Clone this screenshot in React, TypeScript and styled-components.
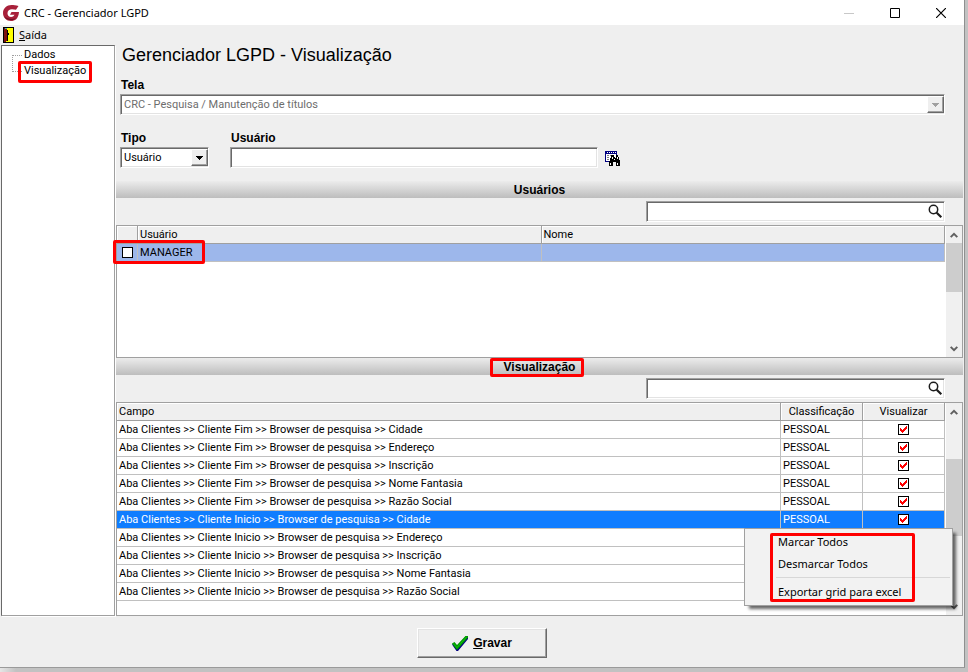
import React from "react";
import styled, { createGlobalStyle, css } from "styled-components";

const ui = `"Noto Sans", "Segoe UI", sans-serif`;
const sans = `"Liberation Sans", Arial, sans-serif`;
const compact = `Roboto, Arial, sans-serif`;

const GlobalStyle = createGlobalStyle`
  * { box-sizing: border-box; }
  body { margin: 0; background: #c2c2c2; font: 11px/16px ${compact}; color: #000; }
  button, input, select { font: inherit; color: inherit; margin: 0; padding: 0; border: 0; border-radius: 0; outline: 0; }
`;

const Desktop = styled.div`
  display: flex;
  min-height: 100vh;
  padding: 0 3px 4px 0;
  background: linear-gradient(to right, #e6e6e6, #c2c2c2 16px);
`;

const Window = styled.div`
  flex: 1;
  min-width: 0;
  display: flex;
  flex-direction: column;
  background: #efefef;
  border-right: 1px solid #8f8f8f;
  border-bottom: 1px solid #9a9a9a;
`;

const TitleBar = styled.header`
  display: flex;
  align-items: center;
  height: 25px;
  padding-left: 3px;
  background: #fff;
  font: 11px/16px ${ui};
`;

const Title = styled.span`
  flex: 1;
  padding-left: 5px;
`;

const CaptionButton = styled.button`
  display: flex;
  align-items: center;
  justify-content: center;
  width: 46px;
  height: 24px;
  background: none;
`;

const MenuBar = styled.nav`
  display: flex;
  height: 20px;
  padding-left: 3px;
`;

const MenuBarItem = styled.button`
  display: flex;
  align-items: center;
  gap: 5px;
  background: none;
  font: 11px/16px ${ui};
`;

const Body = styled.div`
  flex: 1;
  display: flex;
`;

const Sidebar = styled.aside`
  width: 114px;
  margin: 0 1px;
  padding: 1px 0 0 10px;
  background: #fff;
  border: 1px solid #a0a0a0;
  border-left-color: #696969;
  border-top-color: #696969;
  box-shadow: 1px 1px 0 #fff;
`;

const TreeList = styled.ul`
  margin: 0;
  padding: 0;
  list-style: none;
`;

const TreeItem = styled.li<{ $last?: boolean }>`
  position: relative;
  display: flex;
  align-items: center;
  height: 16px;
  padding-left: 12px;
  &::before {
    content: "";
    position: absolute;
    left: 0;
    top: ${(p) => (p.$last ? 0 : 8)}px;
    width: 9px;
    height: 8px;
    border-left: 1px dotted #a0a0a0;
    border-${(p) => (p.$last ? "bottom" : "top")}: 1px dotted #a0a0a0;
  }
`;

const TreeLink = styled.a`
  color: #000;
  text-decoration: none;
`;

const Highlight = styled.span<{ $x: number; $y: number; $w: number; $h: number }>`
  position: absolute;
  left: ${(p) => p.$x}px;
  top: ${(p) => p.$y}px;
  width: ${(p) => p.$w}px;
  height: ${(p) => p.$h}px;
  border: 3px solid #f00;
  border-radius: 2px;
  pointer-events: none;
  z-index: 3;
`;

const Main = styled.main`
  flex: 1;
  min-width: 0;
  display: flex;
  flex-direction: column;
  padding-right: 1px;
`;

const Heading = styled.h1`
  margin: 0 0 11px 6px;
  font: 18px/21px ${sans};
`;

const Form = styled.form`
  display: flex;
  flex-direction: column;
  gap: 15px;
  padding: 0 18px 13px 4px;
`;

const FieldRow = styled.div`
  display: flex;
  align-items: flex-end;
  gap: 21px;
`;

const Field = styled.div<{ $width?: string }>`
  width: ${(p) => p.$width ?? "100%"};
  display: flex;
  flex-direction: column;
`;

const Label = styled.label`
  height: 17px;
  padding-left: 1px;
  font: bold 12px/16px ${sans};
`;

const sunken = css`
  border: 1px solid;
  border-color: #a0a0a0 #fff #fff #a0a0a0;
  box-shadow: inset 1px 1px 0 #696969, inset -1px -1px 0 #e3e3e3;
`;

const ComboBox = styled.div<{ $muted?: boolean }>`
  display: flex;
  height: 21px;
  padding: 1px 0 1px 1px;
  background: #fff;
  color: ${(p) => (p.$muted ? "#6d6d6d" : "#000")};
  ${sunken}
`;

const Select = styled.select`
  flex: 1;
  min-width: 0;
  padding-left: 2px;
  appearance: none;
  background: none;
  opacity: 1;
`;

const Arrow = styled.span`
  display: flex;
  align-items: center;
  justify-content: center;
  width: 17px;
  background: #efefef;
  border: 1px solid;
  border-color: #fff #696969 #696969 #fff;
  box-shadow: inset -1px -1px 0 #a0a0a0;
`;

const TextInput = styled.input`
  width: 100%;
  height: 21px;
  padding: 0 3px;
  background: #fff;
  ${sunken}
`;

const LookupGroup = styled.div`
  display: flex;
  align-items: center;
  gap: 7px;
`;

const IconButton = styled.button`
  display: flex;
  align-items: center;
  justify-content: center;
  background: none;
`;

const SectionBar = styled.h2`
  display: flex;
  align-items: center;
  justify-content: center;
  position: relative;
  margin: 0;
  height: 17px;
  background: linear-gradient(#ececec, #bdbdbd);
  font: bold 12px/16px ${sans};
`;

const SectionTitle = styled.span`
  position: relative;
`;

const SearchRow = styled.div`
  display: flex;
  justify-content: flex-end;
  padding: 3px 18px 3px 0;
`;

const SearchBox = styled.div`
  display: flex;
  width: 299px;
  height: 21px;
  padding: 1px;
  background: #fff;
  ${sunken}
`;

const SearchInput = styled.input`
  flex: 1;
  min-width: 0;
  background: none;
`;

const GridFrame = styled.section<{ $grow?: boolean }>`
  position: relative;
  display: flex;
  ${(p) => (p.$grow ? "flex: 1;" : "height: 133px;")}
  background: #fff;
  border: 1px solid #a0a0a0;
`;

const GridArea = styled.div`
  flex: 1;
  min-width: 0;
`;

const Table = styled.table`
  width: 100%;
  table-layout: fixed;
  border-collapse: separate;
  border-spacing: 0;
`;

const Col = styled.col<{ $width?: number }>`
  width: ${(p) => (p.$width ? `${p.$width}px` : "auto")};
`;

const Th = styled.th<{ $center?: boolean }>`
  height: 18px;
  padding: 0 2px;
  background: #efefef;
  border: 0 solid #a0a0a0;
  border-width: 0 1px 1px 0;
  box-shadow: inset 1px 1px 0 #fff;
  font-weight: normal;
  line-height: 16px;
  text-align: ${(p) => (p.$center ? "center" : "left")};
`;

const Td = styled.td<{ $center?: boolean }>`
  position: relative;
  height: 18px;
  padding: 0 2px;
  border: 0 solid #c0c0c0;
  border-width: 0 1px 1px 0;
  line-height: 16px;
  white-space: nowrap;
  text-align: ${(p) => (p.$center ? "center" : "left")};
`;

const Tr = styled.tr<{ $tone?: "active" | "soft" }>`
  ${(p) => p.$tone === "active" && "background: #107dff; color: #fff;"}
  ${(p) => p.$tone === "soft" && "background: #9db7eb;"}
`;

const Tick = styled.label`
  display: grid;
  justify-content: center;
  align-content: center;
  > * { grid-area: 1 / 1; }
  svg { margin: 2px; pointer-events: none; visibility: hidden; }
  input:checked + svg { visibility: visible; }
`;

const TickInput = styled.input`
  appearance: none;
  width: 11px;
  height: 11px;
  background: #fff;
  border: 1px solid #000;
`;

const ScrollBar = styled.div`
  width: 17px;
  display: flex;
  flex-direction: column;
  background: #f0f0f0;
  border-left: 1px solid #fff;
`;

const ScrollButton = styled.button`
  display: flex;
  align-items: center;
  justify-content: center;
  height: 17px;
  background: none;
`;

const ScrollTrack = styled.div<{ $start: number }>`
  flex: 1;
  padding-top: ${(p) => p.$start}px;
`;

const Thumb = styled.div<{ $size: number }>`
  height: ${(p) => p.$size}px;
  background: #cdcdcd;
`;

const ContextMenu = styled.div`
  position: absolute;
  right: 9px;
  bottom: 9px;
  width: 209px;
  height: 78px;
  padding: 2px 2px 2px 31px;
  background: #f2f2f2;
  border: 1px solid #a0a0a0;
  box-shadow: 4px 4px 3px -1px rgba(0, 0, 0, 0.6);
  font: 11px/16px ${ui};
  z-index: 2;
`;

const MenuItem = styled.button`
  display: block;
  width: 100%;
  height: 22px;
  padding-left: 2px;
  background: none;
  text-align: left;
`;

const Separator = styled.hr`
  margin: 2px 0 3px;
  border: 0;
  border-top: 1px solid #d7d7d7;
`;

const Footer = styled.footer`
  display: flex;
  justify-content: center;
  padding: 12px 0 9px;
`;

const SaveButton = styled.button`
  display: flex;
  align-items: center;
  justify-content: center;
  gap: 5px;
  width: 130px;
  height: 30px;
  background: #efefef;
  border: 1px solid;
  border-color: #fff #696969 #696969 #fff;
  box-shadow: inset -1px -1px 0 #a0a0a0, inset 1px 1px 0 #e3e3e3;
  font: bold 12px/16px ${sans};
`;

const LogoIcon = () => (
  <svg width="16" height="16" viewBox="0 0 16 16">
    <path d="M15.500 1C13 .2 10.500 0 8.500 0 3.800 0 0 3.400 0 8s3.600 8 8 8c3.800 0 7.400-2 8-9H8.500L7 9.800h4.500c-.8 1.500-2 2.200-3.400 2.200C5.900 12 4.500 10.300 4.500 8.200 4.500 5.500 6.500 4.200 9 4.200c1.600 0 3 .2 4 .6z" fill="#a8203a" />
    <path d="M1 11.500C3 15 9 16.500 13 13.200 9.500 14.600 4.500 14 1 11.500z" fill="#6f1226" />
  </svg>
);

const DoorIcon = () => (
  <svg width="11" height="16" viewBox="0 0 11 16" shapeRendering="crispEdges">
    <rect width="11" height="16" fill="#000" />
    <rect x="1" y="1" width="9" height="14" fill="#ff0" />
    <path d="M1 1h2v1h1v12H3v1H1z" fill="#7b1010" />
    <path d="M2 1h2v1H2z" fill="#35b8c8" />
    <path d="M4 3h1v11H4zM5 6h1v2H5z" fill="#000" />
  </svg>
);

const LookupIcon = () => (
  <svg width="16" height="16" viewBox="0 0 16 16" shapeRendering="crispEdges">
    <path d="M0 1h12v11H0z" fill="#000080" />
    <path d="M1 4h10v7H1zM2 2h1v1H2zM4 2h1v1H4zM6 2h1v1H6zM8 2h1v1H8zM10 2h1v1h-1z" fill="#fff" />
    <path d="M2 5h2v1H2zM5 5h3v1H5zM2 7h2v1H2zM2 9h2v1H2z" fill="#808080" />
    <path d="M6 5h3v2h1v1h1V7h0V5h2v2h1v3h1v6h-4v-4H8v4H4v-5h1V8h1z" fill="#000" />
    <path d="M5 13h1v2H5zM12 13h1v2h-1zM7 7h1v2H7zM12 7h1v2h-1zM9 9h1v1H9z" fill="#fff" />
  </svg>
);

const SearchIcon = () => (
  <svg width="15" height="15" viewBox="0 0 15 15" fill="none" stroke="#1c1c1c">
    <circle cx="5.500" cy="5.500" r="4.200" strokeWidth="1.500" />
    <path d="M8.700 8.700l4.600 4.600" strokeWidth="2.200" />
  </svg>
);

const ArrowIcon = ({ color }: { color: string }) => (
  <svg width="7" height="4" viewBox="0 0 7 4" shapeRendering="crispEdges">
    <path d="M0 0h7v1H6v1H5v1H4v1H3V3H2V2H1V1H0z" fill={color} />
  </svg>
);

const Chevron = ({ down }: { down?: boolean }) => (
  <svg width="8" height="6" viewBox="0 0 8 6" fill="none" stroke="#606060" strokeWidth="2">
    <path d={down ? "M.7.900L4 4.200 7.300.900" : "M.7 5.100L4 1.800l3.300 3.300"} />
  </svg>
);

const CheckIcon = () => (
  <svg width="16" height="15" viewBox="0 0 16 15">
    <path d="M0 8.500l2.500-1.500 2.500 3L14 0h2v3L6 15H4.500z" fill="#000080" />
    <path d="M0 7.500L2.500 6 5 9 13.500 0H16v1.500L5.500 13.500h-1z" fill="#009a00" />
    <path d="M1 7.500l4 4L14.500 1" fill="none" stroke="#10c010" />
  </svg>
);

const CheckCell = ({ label, checked }: { label: string; checked?: boolean }) => (
  <Tick>
    <TickInput type="checkbox" aria-label={label} defaultChecked={checked} />
    <svg width="7" height="7" viewBox="0 0 7 7" shapeRendering="crispEdges">
      <path d="M0 2h1v1h1v1h1V3h1V2h1V1h1V0h1v3H6v1H5v1H4v1H3v1H2V6H1V5H0z" fill="#f00" />
    </svg>
  </Tick>
);

const Scroller = ({ start, size }: { start: number; size: number }) => (
  <ScrollBar>
    <ScrollButton aria-label="Rolar para cima"><Chevron /></ScrollButton>
    <ScrollTrack $start={start}><Thumb $size={size} /></ScrollTrack>
    <ScrollButton aria-label="Rolar para baixo"><Chevron down /></ScrollButton>
  </ScrollBar>
);

const Search = ({ label }: { label: string }) => (
  <SearchRow>
    <SearchBox>
      <SearchInput aria-label={label} />
      <IconButton aria-label="Pesquisar"><SearchIcon /></IconButton>
    </SearchBox>
  </SearchRow>
);

const fields = ["Cidade", "Endereço", "Inscrição", "Nome Fantasia", "Razão Social"];
const rows = ["Fim", "Inicio"].flatMap((group) =>
  fields.map((field) => ({
    text: `Aba Clientes >> Cliente ${group} >> Browser de pesquisa >> ${field}`,
    level: group === "Fim" || field === "Cidade" ? "PESSOAL" : "",
  }))
);
const selectedRow = 5;

export default function App() {
  return (
    <>
      <GlobalStyle />
      <Desktop>
        <Window>
          <TitleBar>
            <LogoIcon />
            <Title>CRC - Gerenciador LGPD</Title>
            <CaptionButton aria-label="Minimizar">
              <svg width="10" height="10"><path d="M0 5.500h10" stroke="#c8c8c8" /></svg>
            </CaptionButton>
            <CaptionButton aria-label="Maximizar">
              <svg width="10" height="10"><path d="M.5.500h9v9h-9z" fill="none" stroke="#000" /></svg>
            </CaptionButton>
            <CaptionButton aria-label="Fechar">
              <svg width="10" height="10"><path d="M0 0l10 10M10 0L0 10" stroke="#000" strokeWidth="1.200" /></svg>
            </CaptionButton>
          </TitleBar>
          <MenuBar>
            <MenuBarItem><DoorIcon /><span><u>S</u>aída</span></MenuBarItem>
          </MenuBar>
          <Body>
            <Sidebar>
              <TreeList>
                <TreeItem><TreeLink href="#dados">Dados</TreeLink></TreeItem>
                <TreeItem $last>
                  <TreeLink href="#visualizacao">Visualização</TreeLink>
                  <Highlight $x={6} $y={-2} $w={74} $h={22} />
                </TreeItem>
              </TreeList>
            </Sidebar>
            <Main>
              <Heading>Gerenciador LGPD - Visualização</Heading>
              <Form onSubmit={(e) => e.preventDefault()}>
                <Field>
                  <Label htmlFor="tela">Tela</Label>
                  <ComboBox $muted>
                    <Select id="tela" disabled>
                      <option>CRC - Pesquisa / Manutenção de títulos</option>
                    </Select>
                    <Arrow><ArrowIcon color="#a0a0a0" /></Arrow>
                  </ComboBox>
                </Field>
                <FieldRow>
                  <Field $width="89px">
                    <Label htmlFor="tipo">Tipo</Label>
                    <ComboBox>
                      <Select id="tipo"><option>Usuário</option></Select>
                      <Arrow><ArrowIcon color="#000" /></Arrow>
                    </ComboBox>
                  </Field>
                  <Field $width="391px">
                    <Label htmlFor="usuario">Usuário</Label>
                    <LookupGroup>
                      <TextInput id="usuario" />
                      <IconButton type="button" aria-label="Localizar usuário"><LookupIcon /></IconButton>
                    </LookupGroup>
                  </Field>
                </FieldRow>
              </Form>
              <SectionBar>Usuários</SectionBar>
              <Search label="Pesquisar usuários" />
              <GridFrame>
                <GridArea>
                  <Table>
                    <colgroup><Col $width={21} /><Col /><Col /></colgroup>
                    <thead><tr><Th /><Th>Usuário</Th><Th>Nome</Th></tr></thead>
                    <tbody>
                      <Tr $tone="soft">
                        <Td>
                          <CheckCell label="MANAGER" />
                          <Highlight $x={-4} $y={-4} $w={92} $h={24} />
                        </Td>
                        <Td>MANAGER</Td>
                        <Td />
                      </Tr>
                    </tbody>
                  </Table>
                </GridArea>
                <Scroller start={0} size={49} />
              </GridFrame>
              <SectionBar>
                <SectionTitle>
                  Visualização
                  <Highlight $x={-14} $y={-1} $w={94} $h={19} />
                </SectionTitle>
              </SectionBar>
              <Search label="Pesquisar campos" />
              <GridFrame $grow>
                <GridArea>
                  <Table>
                    <colgroup><Col /><Col $width={82} /><Col $width={82} /></colgroup>
                    <thead><tr><Th>Campo</Th><Th $center>Classificação</Th><Th $center>Visualizar</Th></tr></thead>
                    <tbody>
                      {rows.map((row, i) => (
                        <Tr key={row.text} $tone={i === selectedRow ? "active" : undefined}>
                          <Td>{row.text}</Td>
                          <Td>{row.level}</Td>
                          <Td $center><CheckCell label={row.text} checked /></Td>
                        </Tr>
                      ))}
                    </tbody>
                  </Table>
                </GridArea>
                <Scroller start={39} size={77} />
                <ContextMenu role="menu">
                  <MenuItem role="menuitem">Marcar Todos</MenuItem>
                  <MenuItem role="menuitem">Desmarcar Todos</MenuItem>
                  <Separator />
                  <MenuItem role="menuitem">Exportar grid para excel</MenuItem>
                  <Highlight $x={25} $y={4} $w={145} $h={69} />
                </ContextMenu>
              </GridFrame>
            </Main>
          </Body>
          <Footer>
            <SaveButton><CheckIcon /><span><u>G</u>ravar</span></SaveButton>
          </Footer>
        </Window>
      </Desktop>
    </>
  );
}
